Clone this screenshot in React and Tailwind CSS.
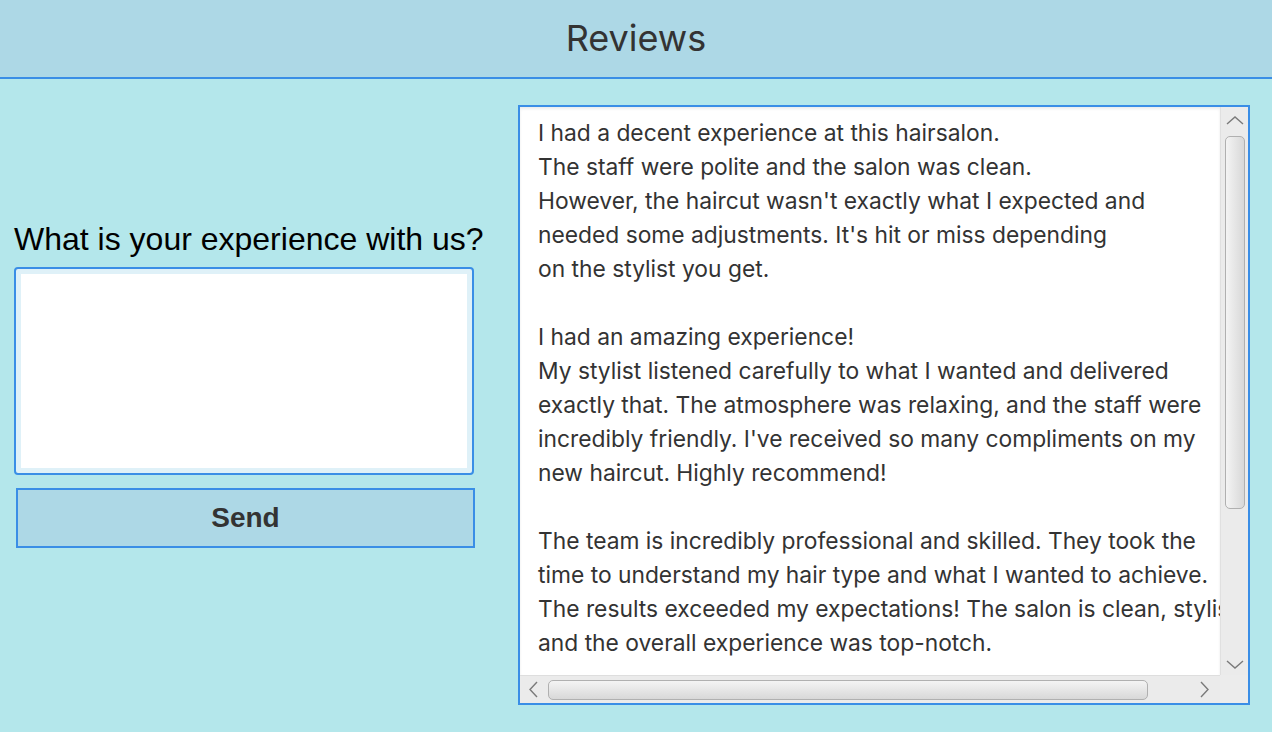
const reviews = [
  'I had a decent experience at this hairsalon.',
  'The staff were polite and the salon was clean.',
  "However, the haircut wasn't exactly what I expected and",
  "needed some adjustments. It's hit or miss depending",
  'on the stylist you get.',
  '',
  'I had an amazing experience!',
  'My stylist listened carefully to what I wanted and delivered',
  'exactly that. The atmosphere was relaxing, and the staff were',
  "incredibly friendly. I've received so many compliments on my",
  'new haircut. Highly recommend!',
  '',
  'The team is incredibly professional and skilled. They took the',
  'time to understand my hair type and what I wanted to achieve.',
  'The results exceeded my expectations! The salon is clean, stylish,',
  'and the overall experience was top-notch.',
];

// thin scrollbar arrows, drawn like the JavaFX ones
const ArrowV = ({ down }) => (
  <svg width="18" height="9" viewBox="0 0 18 9" className="shrink-0">
    <polyline
      points={down ? '1,1 9,8 17,1' : '1,8 9,1 17,8'}
      fill="none"
      stroke="#7a7a7a"
      strokeWidth="1.4"
    />
  </svg>
);

const ArrowH = ({ right }) => (
  <svg width="9" height="17" viewBox="0 0 9 17" className="shrink-0">
    <polyline
      points={right ? '1,1 8,8.5 1,16' : '8,1 1,8.5 8,16'}
      fill="none"
      stroke="#7a7a7a"
      strokeWidth="1.4"
    />
  </svg>
);

const App = () => {
  return (
    <div className="w-[1272px] h-[732px] bg-[#b4e7eb] flex flex-col overflow-hidden">
      {/* Header */}
      <div className="h-[79px] bg-[#add8e6] border-b-2 border-[#3a8ee6] flex items-center justify-center shrink-0">
        <h1 className="text-[36px] text-[#333333] font-['Inter',sans-serif] pb-[2px]">Reviews</h1>
      </div>

      <div className="flex flex-1">
        {/* Left form */}
        <div className="w-[518px] shrink-0 pl-[14px] pt-[142px]">
          <p className="font-['Liberation_Sans',Arial,sans-serif] text-[32px] leading-[36px] text-black whitespace-nowrap">
            What is your experience with us?
          </p>
          <div className="mt-[10px] w-[460px] h-[208px] border-2 border-[#3a8ee6] rounded-[4px] bg-[#dff1f8] p-[5px]">
            <textarea className="w-full h-full bg-white resize-none outline-none border-0" />
          </div>
          <button className="mt-[13px] ml-[2px] w-[459px] h-[60px] bg-[#add8e6] border-2 border-[#3a8ee6] font-['Liberation_Sans',Arial,sans-serif] font-bold text-[28px] text-[#333333] flex items-center justify-center">
            Send
          </button>
        </div>

        {/* Reviews box */}
        <div className="mt-[26px] w-[732px] h-[600px] border-2 border-[#3a8ee6] bg-[#ececec] flex flex-col">
          <div className="flex flex-1 min-h-0">
            <div className="flex-1 bg-white overflow-hidden pl-[18px] pt-[9px] shadow-[inset_0_2px_3px_rgba(0,0,0,0.08)]">
              {reviews.map((line, i) => (
                <div
                  key={i}
                  className="h-[34px] leading-[34px] whitespace-pre font-['Inter',sans-serif] text-[22.8px] text-[#333333]"
                >
                  {line}
                </div>
              ))}
            </div>
            {/* Vertical scrollbar */}
            <div className="w-[28px] shrink-0 bg-[#ebebeb] border-l border-[#e0e0e0] flex flex-col items-center">
              <div className="mt-[9px]">
                <ArrowV />
              </div>
              <div className="mt-[11px] w-[20px] h-[373px] rounded-[5px] border border-[#b0b0b0] bg-gradient-to-r from-[#f4f4f4] to-[#d8d8d8] shrink-0" />
              <div className="flex-1" />
              <div className="mb-[6px]">
                <ArrowV down />
              </div>
            </div>
          </div>
          {/* Horizontal scrollbar */}
          <div className="h-[28px] shrink-0 flex">
            <div className="flex-1 bg-[#ebebeb] border-t border-[#dedede] flex items-center">
              <div className="ml-[9px] flex">
                <ArrowH />
              </div>
              <div className="ml-[10px] w-[600px] h-[20px] rounded-[5px] border border-[#b0b0b0] bg-gradient-to-b from-[#f4f4f4] to-[#d8d8d8] shrink-0" />
              <div className="flex-1" />
              <div className="mr-[11px] flex">
                <ArrowH right />
              </div>
            </div>
            <div className="w-[28px] bg-[#ececec]" />
          </div>
        </div>
      </div>
    </div>
  );
};

export default App;
